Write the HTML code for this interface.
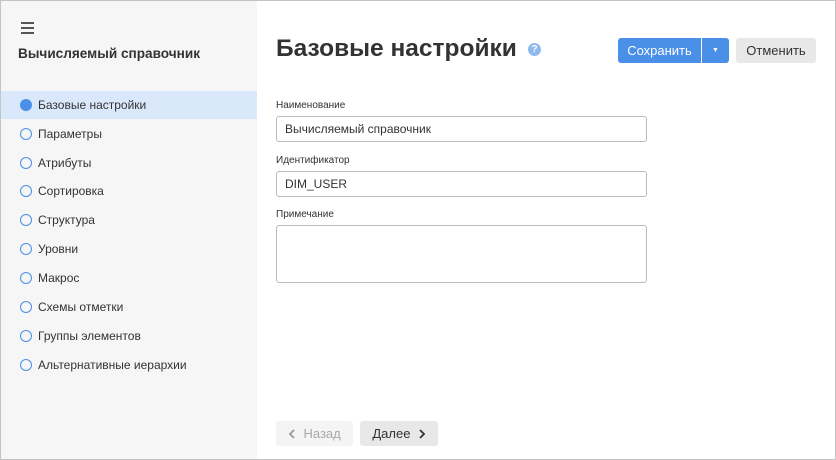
<!DOCTYPE html>
<html><head><meta charset="utf-8"><style>
*{box-sizing:border-box;margin:0;padding:0}
body{width:836px;height:460px;font-family:"Liberation Sans",sans-serif;background:#fff;position:relative;overflow:hidden;color:#333}
.frame{position:absolute;left:0;top:0;width:836px;height:460px;border:1px solid #c4c4c4}
.side{position:absolute;left:1px;top:1px;width:256px;height:458px;background:#f6f6f6}
.ham{position:absolute;left:20px;top:21px;width:13px}
.ham i{display:block;height:2px;background:#555;margin-bottom:3px}
.stitle{position:absolute;left:17px;top:45px;font-size:13.6px;font-weight:bold;color:#333}
.item{position:absolute;left:0;width:256px;height:28px;font-size:12px;color:#333;padding-left:37px;line-height:28px}
.item:before{content:"";position:absolute;left:19px;top:8px;width:12px;height:12px;border:1.5px solid #4a8fe8;border-radius:50%;box-sizing:border-box}
.item.act{background:#dae8fb}
.item.act:before{background:#4a8fe8}
h1{position:absolute;left:276px;top:35px;font-size:24.5px;font-weight:bold;color:#333}
.help{position:absolute;left:528px;top:43px;width:13px;height:13px;border-radius:50%;background:#8fb9ef;color:#fff;font-size:10px;font-weight:bold;text-align:center;line-height:13px}
.btn{position:absolute;height:25px;border-radius:3px;font-size:13px;line-height:25px;text-align:center}
.btn svg{vertical-align:-1px}
.lbl{position:absolute;left:276px;font-size:10px;color:#333}
.inp{position:absolute;left:276px;width:371px;height:26px;border:1px solid #bbb;border-radius:3px;font-size:12px;padding-left:8px;line-height:24px}
</style></head><body>
<div class="side">
<div class="ham"><i></i><i></i><i></i></div>
<div class="stitle">Вычисляемый справочник</div>
<div class="item act" style="top:90px">Базовые настройки</div>
<div class="item" style="top:119px">Параметры</div>
<div class="item" style="top:148px">Атрибуты</div>
<div class="item" style="top:176px">Сортировка</div>
<div class="item" style="top:205px">Структура</div>
<div class="item" style="top:234px">Уровни</div>
<div class="item" style="top:263px">Макрос</div>
<div class="item" style="top:292px">Схемы отметки</div>
<div class="item" style="top:321px">Группы элементов</div>
<div class="item" style="top:350px">Альтернативные иерархии</div>
</div>
<h1>Базовые настройки</h1>
<div class="help">?</div>
<div class="btn" style="left:618px;top:38px;width:83px;background:#4a8fe8;color:#fff;border-radius:3px 0 0 3px">Сохранить</div>
<div class="btn" style="left:702px;top:38px;width:27px;background:#4a8fe8;color:#fff;border-radius:0 3px 3px 0;font-size:7px">▼</div>
<div class="btn" style="left:736px;top:38px;width:80px;background:#e8e8e8;color:#333">Отменить</div>
<div class="lbl" style="top:100px">Наименование</div>
<div class="inp" style="top:116px">Вычисляемый справочник</div>
<div class="lbl" style="top:155px">Идентификатор</div>
<div class="inp" style="top:171px">DIM_USER</div>
<div class="lbl" style="top:209px">Примечание</div>
<div class="inp" style="top:225px;height:58px"></div>
<div class="btn" style="left:276px;top:421px;width:77px;background:#f4f4f4;color:#a9a9a9"><svg width="8" height="10" viewBox="0 0 8 10"><path d="M6 1 2 5l4 4" fill="none" stroke="#999" stroke-width="1.8"/></svg>&nbsp; Назад</div>
<div class="btn" style="left:360px;top:421px;width:78px;background:#e8e8e8;color:#333">Далее &nbsp;<svg width="8" height="10" viewBox="0 0 8 10"><path d="M2 1l4 4-4 4" fill="none" stroke="#333" stroke-width="1.8"/></svg></div>
<div class="frame"></div>
</body></html>
